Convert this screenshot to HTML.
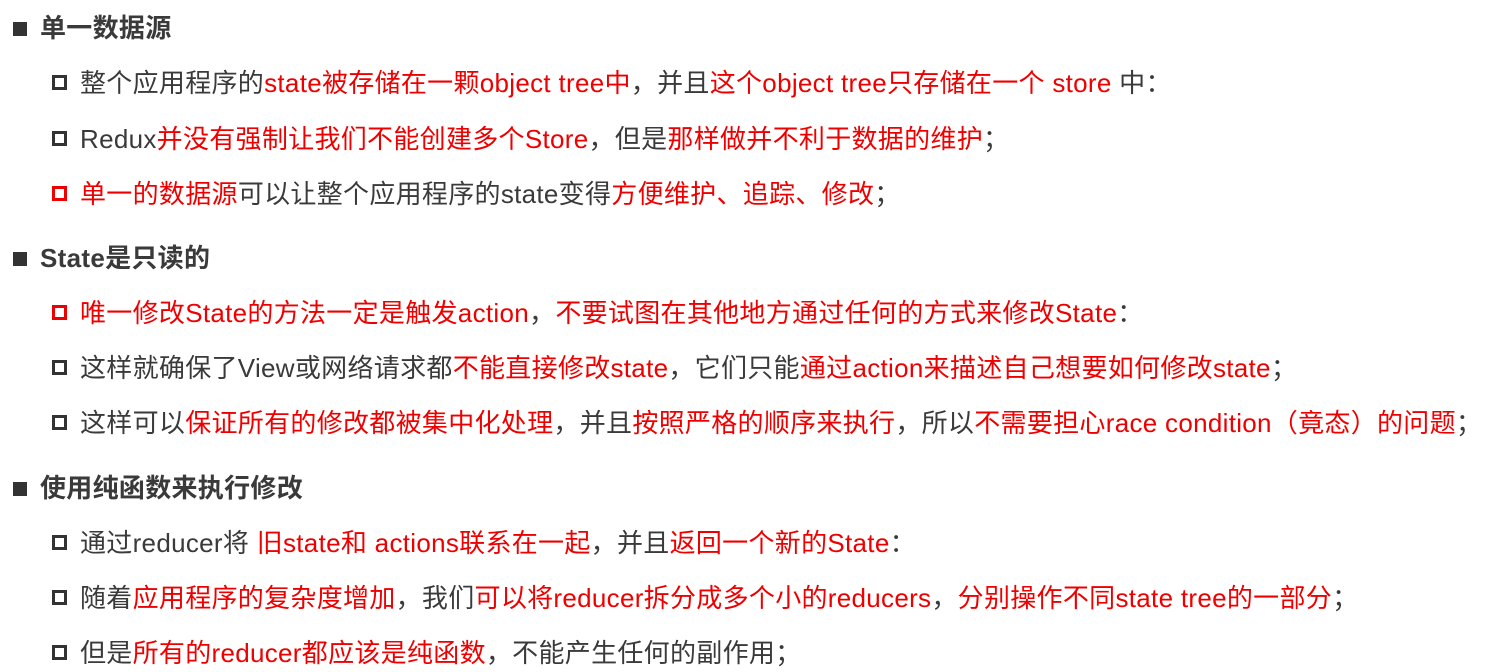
<!DOCTYPE html>
<html><head><meta charset="utf-8"><style>
body{margin:0;width:1493px;height:672px;background:#fff;overflow:hidden;font-family:"Liberation Sans","Noto Sans CJK SC",sans-serif;color:#3a3a3a;}
.l{position:absolute;white-space:nowrap;font-size:26px;line-height:30px;letter-spacing:0.3px;}
.h{left:13px;font-weight:bold;}
.h i{display:inline-block;width:14px;height:14px;background:#333;margin-right:13px;vertical-align:1px;}
.b{left:52px;}
.b i{display:inline-block;width:9px;height:9px;border:3px solid #333;margin-right:13px;vertical-align:2px;}
.b i.r{border-color:#e00;}
.r2{color:#e00;}
</style></head><body>
<div class="l h" style="top:13px"><i></i>单一数据源</div>
<div class="l b" style="top:68px"><i></i>整个应用程序的<span class="r2">state被存储在一颗object tree中</span>，并且<span class="r2">这个object tree只存储在一个 store</span> 中：</div>
<div class="l b" style="top:124px"><i></i>Redux<span class="r2">并没有强制让我们不能创建多个Store</span>，但是<span class="r2">那样做并不利于数据的维护</span>；</div>
<div class="l b" style="top:179px"><i class="r"></i><span class="r2">单一的数据源</span>可以让整个应用程序的state变得<span class="r2">方便维护、追踪、修改</span>；</div>
<div class="l h" style="top:243px"><i></i>State是只读的</div>
<div class="l b" style="top:298px"><i class="r"></i><span class="r2">唯一修改State的方法一定是触发action</span>，<span class="r2">不要试图在其他地方通过任何的方式来修改State</span>：</div>
<div class="l b" style="top:353px"><i></i>这样就确保了View或网络请求都<span class="r2">不能直接修改state</span>，它们只能<span class="r2">通过action来描述自己想要如何修改state</span>；</div>
<div class="l b" style="top:408px"><i></i>这样可以<span class="r2">保证所有的修改都被集中化处理</span>，并且<span class="r2">按照严格的顺序来执行</span>，所以<span class="r2">不需要担心race condition（竟态）的问题</span>；</div>
<div class="l h" style="top:473px"><i></i>使用纯函数来执行修改</div>
<div class="l b" style="top:528px"><i></i>通过reducer将 <span class="r2">旧state和 actions联系在一起</span>，并且<span class="r2">返回一个新的State</span>：</div>
<div class="l b" style="top:583px"><i></i>随着<span class="r2">应用程序的复杂度增加</span>，我们<span class="r2">可以将reducer拆分成多个小的reducers</span>，<span class="r2">分别操作不同state tree的一部分</span>；</div>
<div class="l b" style="top:638px"><i></i>但是<span class="r2">所有的reducer都应该是纯函数</span>，不能产生任何的副作用；</div>
</body></html>
